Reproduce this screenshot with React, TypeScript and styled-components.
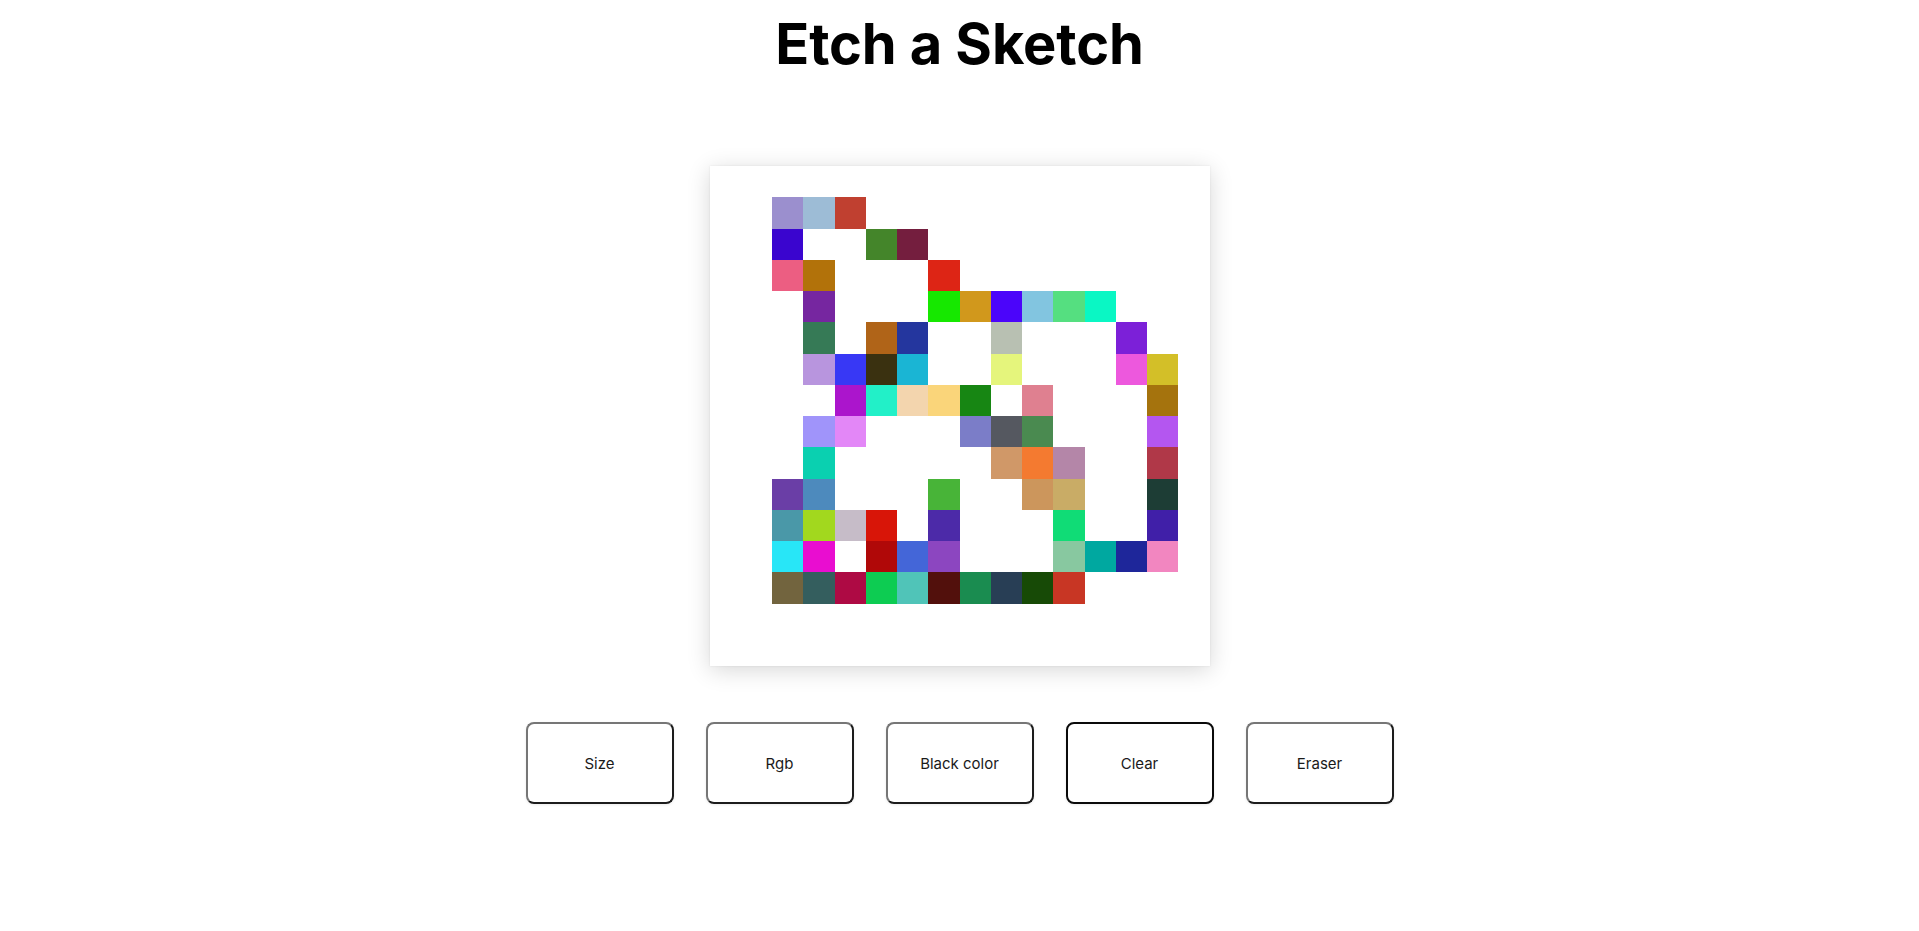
import React from "react";
import styled, { createGlobalStyle } from "styled-components";

const GlobalStyle = createGlobalStyle`
  html, body {
    margin: 0;
    padding: 0;
    background: #ffffff;
    font-family: Inter, "Noto Sans", sans-serif;
    color: #000;
  }
`;

const Page = styled.main`
  display: flex;
  flex-direction: column;
  align-items: center;
  min-height: 100vh;
`;

const Title = styled.h1`
  margin: 10px 0 0;
  font-family: Inter, sans-serif;
  font-weight: 700;
  font-size: 56px;
  line-height: 68px;
  letter-spacing: -0.1px;
  color: #000;
`;

const Board = styled.div`
  margin-top: 88px;
  width: 500px;
  height: 500px;
  background: #ffffff;
  display: grid;
  grid-template-columns: repeat(16, 1fr);
  grid-template-rows: repeat(16, 1fr);
  box-shadow: 0 4px 22px rgba(0, 0, 0, 0.16), 0 0 2px rgba(0, 0, 0, 0.08);
`;

const Cell = styled.div<{ $color?: string }>`
  background: ${(p) => p.$color ?? "transparent"};
`;

const Controls = styled.div`
  margin-top: 56px;
  display: flex;
  gap: 32px;
`;

const Button = styled.button<{ $active?: boolean }>`
  width: 148px;
  height: 82px;
  box-sizing: border-box;
  background: #ffffff;
  border-radius: 8px;
  border: 2px solid;
  border-color: ${(p) =>
    p.$active ? "#0a0a0a" : "#767676 #1c1c1c #1c1c1c #767676"};
  font-family: Inter, sans-serif;
  font-size: 15px;
  color: #1a1a1a;
  cursor: pointer;
  box-shadow: 0 1px 3px rgba(0, 0, 0, 0.08);
`;

const painted: Record<string, string> = {
  "1,2": "#9b8fce", "1,3": "#9dbcd6", "1,4": "#c04030",
  "2,2": "#3a05cf", "2,5": "#44852a", "2,6": "#741e3e",
  "3,2": "#ec5e82", "3,3": "#b2720a", "3,7": "#dd2515",
  "4,3": "#7626a0", "4,7": "#16e800", "4,8": "#d1981c", "4,9": "#4b05fa", "4,10": "#82c5e0", "4,11": "#55df80", "4,12": "#0af7c4",
  "5,3": "#367a56", "5,5": "#b06418", "5,6": "#24369e", "5,9": "#b8c0b2", "5,13": "#7c20d8",
  "6,3": "#b895de", "6,4": "#3838f5", "6,5": "#3a3110", "6,6": "#1ab5d4", "6,9": "#e5f57c", "6,13": "#ed58dd", "6,14": "#d3bf28",
  "7,4": "#ab15cc", "7,5": "#22f0c8", "7,6": "#f3d5ae", "7,7": "#fad57a", "7,8": "#178613", "7,10": "#df8090", "7,14": "#a5730d",
  "8,3": "#a094fa", "8,4": "#e387f7", "8,8": "#7b7dc8", "8,9": "#555860", "8,10": "#4a8a50", "8,14": "#b456f0",
  "9,3": "#0ad0b0", "9,9": "#d09868", "9,10": "#f47a30", "9,11": "#b486a8", "9,14": "#b03848",
  "10,2": "#6a3ea6", "10,3": "#4d8abd", "10,7": "#48b438", "10,10": "#cc965c", "10,11": "#c9ac66", "10,14": "#1d3d35",
  "11,2": "#4a98a8", "11,3": "#a2d81e", "11,4": "#c6bcc8", "11,5": "#d81508", "11,7": "#4c2aa8", "11,11": "#10dc76", "11,14": "#401fa8",
  "12,2": "#28e6f7", "12,3": "#e90dd0", "12,5": "#b00808", "12,6": "#4466d8", "12,7": "#8c46c0", "12,11": "#88c8a0", "12,12": "#00a8a0", "12,13": "#1e269a", "12,14": "#f286c0",
  "13,2": "#72643e", "13,3": "#345e5e", "13,4": "#ae0a44", "13,5": "#0dcc52", "13,6": "#50c4b8", "13,7": "#52100c", "13,8": "#1a8c50", "13,9": "#283e55", "13,10": "#174a06", "13,11": "#c83624",
};

const cells = Array.from({ length: 256 }, (_, i) => {
  const r = Math.floor(i / 16);
  const c = i % 16;
  return { key: i, color: painted[`${r},${c}`] };
});

const buttons = [
  { label: "Size" },
  { label: "Rgb" },
  { label: "Black color" },
  { label: "Clear", active: true },
  { label: "Eraser" },
];

export default function App() {
  return (
    <>
      <GlobalStyle />
      <Page>
        <Title>Etch a Sketch</Title>
        <Board>
          {cells.map((c) => (
            <Cell key={c.key} $color={c.color} />
          ))}
        </Board>
        <Controls>
          {buttons.map((b) => (
            <Button key={b.label} $active={b.active}>
              {b.label}
            </Button>
          ))}
        </Controls>
      </Page>
    </>
  );
}
